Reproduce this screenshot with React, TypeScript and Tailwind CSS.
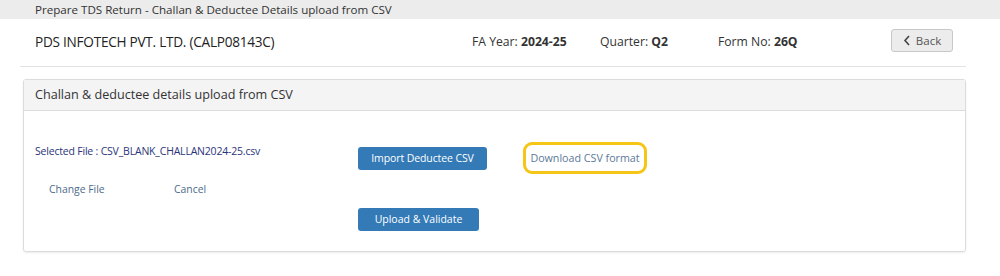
import React from "react";

const font = { fontFamily: '"Open Sans", "Noto Sans", sans-serif' };

const ChallanUpload = () => {
  return (
    <div className="w-[1000px] h-[276px] bg-white text-[#333]" style={font}>
      <div className="h-[19px] bg-[#ececec] pl-[35px] text-[11.6px] leading-[19px] text-[#333]">
        Prepare TDS Return - Challan &amp; Deductee Details upload from CSV
      </div>

      <div className="mx-[20px] w-[946px] h-[48px] border-b border-[#e3e3e3] flex items-center text-[12.2px]">
        <div className="w-[452px] pl-[15px] text-[13.6px] font-medium text-[#222] tracking-[-0.25px]">
          PDS INFOTECH PVT. LTD. (CALP08143C)
        </div>
        <div className="w-[128px]">
          FA Year: <b className="font-bold">2024-25</b>
        </div>
        <div className="w-[118px]">
          Quarter: <b className="font-bold">Q2</b>
        </div>
        <div>
          Form No: <b className="font-bold">26Q</b>
        </div>
        <button className="ml-auto mr-[13px] mt-[-4px] h-[23px] w-[62px] rounded-[3px] border border-[#c8c8c8] bg-[#ececec] text-[11.5px] text-[#555] flex items-center justify-center gap-[5px]">
          <svg width="8" height="11" viewBox="0 0 8 11">
            <path d="M6 1 L2 5.5 L6 10" fill="none" stroke="#444" strokeWidth="1.6" />
          </svg>
          Back
        </button>
      </div>

      <div className="mt-[12px] ml-[23px] w-[943px] border border-[#dcdcdc] rounded-[3px] shadow-[0_1px_2px_rgba(0,0,0,0.08)]">
        <div className="h-[31px] bg-[#f4f4f4] border-b border-[#dcdcdc] pl-[11px] flex items-center text-[12.6px] text-[#333]">
          Challan &amp; deductee details upload from CSV
        </div>
        <div className="flex pb-[20px]">
          <div className="w-[334px] pl-[11px] pt-[33px] text-[10.5px] tracking-[-0.2px]">
            <div className="text-[#2b347a]">Selected File : CSV_BLANK_CHALLAN2024-25.csv</div>
            <div className="flex mt-[22px] pl-[14px] text-[#4d6b8a] tracking-normal text-[10.4px]">
              <span className="w-[125px]">Change File</span>
              <span>Cancel</span>
            </div>
          </div>
          <div className="pt-[36px] flex flex-col items-start gap-[38px]">
            <button className="h-[23px] w-[129px] rounded-[3px] bg-[#337ab7] text-white text-[10.5px] tracking-[-0.1px]">
              Import Deductee CSV
            </button>
            <button className="h-[23px] w-[121px] rounded-[3px] bg-[#337ab7] text-white text-[10.5px]">
              Upload &amp; Validate
            </button>
          </div>
          <div className="pt-[31px] pl-[36px]">
            <div className="h-[32px] w-[124px] rounded-[9px] border-[3px] border-[#f5c518] flex items-center justify-center text-[10.7px] text-[#5c7a99]">
              Download CSV format
            </div>
          </div>
        </div>
      </div>
    </div>
  );
};

export default function App() {
  return <ChallanUpload />;
}
